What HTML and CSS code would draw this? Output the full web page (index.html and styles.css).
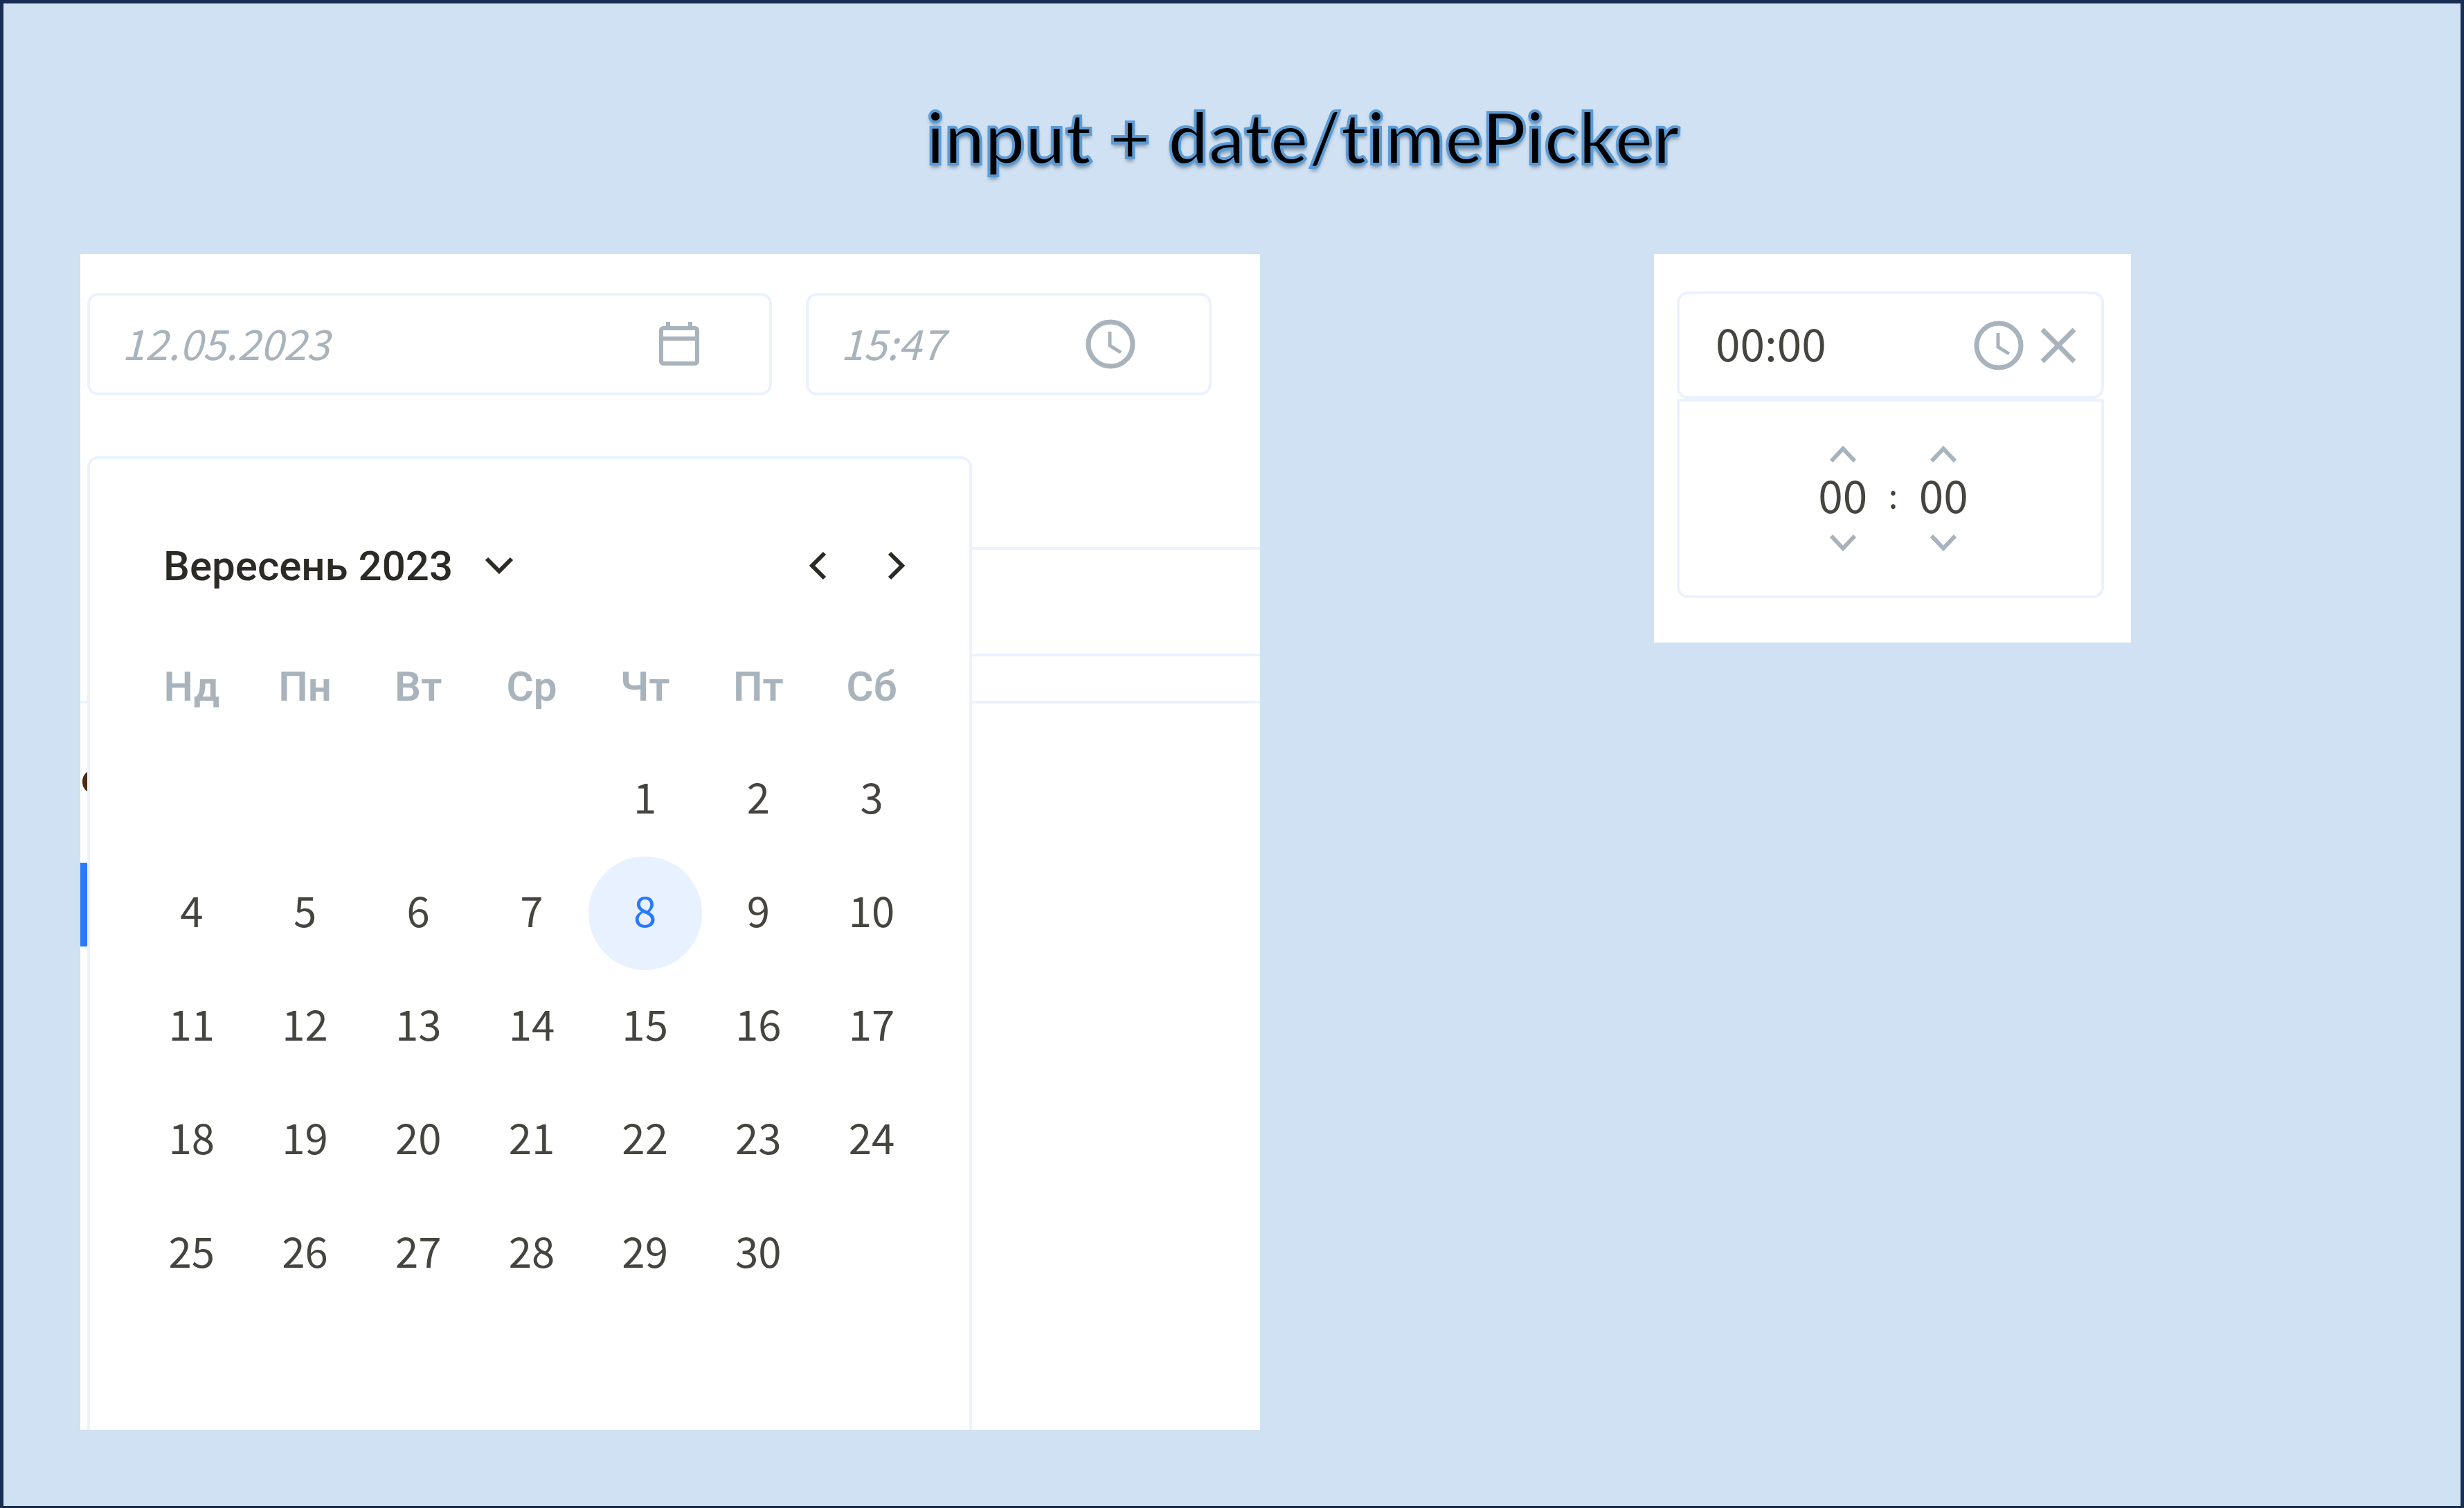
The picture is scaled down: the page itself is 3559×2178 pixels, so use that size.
FILE: index.html
```html
<!DOCTYPE html>
<html lang="uk">
<head>
<meta charset="utf-8">
<meta name="viewport" content="width=device-width, initial-scale=1">
<title>input + date/timePicker</title>
<link rel="stylesheet" href="styles.css">
</head>
<body>
<main class="board">
  <h1 class="title">input + date/timePicker</h1>
  <div class="demos">
    <section class="panel panel-date" aria-label="Date picker">
      <div class="underlay" aria-hidden="true">
        <div class="under-box"></div>
        <div class="under-line"></div>
        <div class="under-text"></div>
        <div class="under-button"></div>
      </div>
      <div class="fields">
        <div class="field field-date">
          <input class="field-input" type="text" placeholder="12.05.2023" aria-label="Дата">
          <svg class="icon-calendar" viewBox="0 0 58 64" fill="none" stroke="currentColor" stroke-width="6" aria-hidden="true"><rect x="3" y="9" width="52" height="51" rx="3"/><path d="M3 24H55M13 0V9M45 0V9"/></svg>
        </div>
        <div class="field field-time">
          <input class="field-input" type="text" placeholder="15:47" aria-label="Час">
          <svg class="icon-clock" viewBox="0 0 72 72" fill="none" stroke="currentColor" aria-hidden="true"><circle cx="36" cy="36" r="32" stroke-width="7"/><path d="M35 18V38L51 48" stroke-width="5"/></svg>
        </div>
      </div>
      <div class="calendar">
        <div class="calendar-head">
          <button class="month" type="button">Вересень 2023
            <svg class="icon-down" viewBox="0 0 42 28" fill="none" stroke="currentColor" stroke-width="6" aria-hidden="true"><path d="M3 4L21 22L39 4"/></svg>
          </button>
          <div class="nav">
            <button class="nav-button" type="button" aria-label="Попередній місяць"><svg class="icon-side" viewBox="0 0 28 42" fill="none" stroke="currentColor" stroke-width="6" aria-hidden="true"><path d="M24 3L6 21L24 39"/></svg></button>
            <button class="nav-button" type="button" aria-label="Наступний місяць"><svg class="icon-side" viewBox="0 0 28 42" fill="none" stroke="currentColor" stroke-width="6" aria-hidden="true"><path d="M4 3L22 21L4 39"/></svg></button>
          </div>
        </div>
        <table class="days">
          <thead>
            <tr><th>Нд</th><th>Пн</th><th>Вт</th><th>Ср</th><th>Чт</th><th>Пт</th><th>Сб</th></tr>
          </thead>
          <tbody>
            <tr><td></td><td></td><td></td><td></td><td><button class="day" type="button">1</button></td><td><button class="day" type="button">2</button></td><td><button class="day" type="button">3</button></td></tr>
            <tr><td><button class="day" type="button">4</button></td><td><button class="day" type="button">5</button></td><td><button class="day" type="button">6</button></td><td><button class="day" type="button">7</button></td><td><button class="day day-current" type="button">8</button></td><td><button class="day" type="button">9</button></td><td><button class="day" type="button">10</button></td></tr>
            <tr><td><button class="day" type="button">11</button></td><td><button class="day" type="button">12</button></td><td><button class="day" type="button">13</button></td><td><button class="day" type="button">14</button></td><td><button class="day" type="button">15</button></td><td><button class="day" type="button">16</button></td><td><button class="day" type="button">17</button></td></tr>
            <tr><td><button class="day" type="button">18</button></td><td><button class="day" type="button">19</button></td><td><button class="day" type="button">20</button></td><td><button class="day" type="button">21</button></td><td><button class="day" type="button">22</button></td><td><button class="day" type="button">23</button></td><td><button class="day" type="button">24</button></td></tr>
            <tr><td><button class="day" type="button">25</button></td><td><button class="day" type="button">26</button></td><td><button class="day" type="button">27</button></td><td><button class="day" type="button">28</button></td><td><button class="day" type="button">29</button></td><td><button class="day" type="button">30</button></td><td></td></tr>
          </tbody>
        </table>
      </div>
    </section>

    <section class="panel panel-time" aria-label="Time picker">
      <div class="field field-clock">
        <input class="field-input" type="text" value="00:00" aria-label="Час">
        <svg class="icon-clock" viewBox="0 0 72 72" fill="none" stroke="currentColor" aria-hidden="true"><circle cx="36" cy="36" r="32" stroke-width="7"/><path d="M35 18V38L51 48" stroke-width="5"/></svg>
        <button class="clear" type="button" aria-label="Очистити"><svg class="icon-close" viewBox="0 0 52 52" fill="none" stroke="currentColor" stroke-width="7" aria-hidden="true"><path d="M3 3L49 49M49 3L3 49"/></svg></button>
      </div>
      <div class="time-menu">
        <div class="spinner">
          <button class="step" type="button" aria-label="Години більше"><svg class="icon-step" viewBox="0 0 38 24" fill="none" stroke="currentColor" stroke-width="6" aria-hidden="true"><path d="M2 22L19 4L36 22"/></svg></button>
          <span class="value">00</span>
          <button class="step" type="button" aria-label="Години менше"><svg class="icon-step" viewBox="0 0 38 24" fill="none" stroke="currentColor" stroke-width="6" aria-hidden="true"><path d="M2 2L19 20L36 2"/></svg></button>
        </div>
        <span class="colon">:</span>
        <div class="spinner">
          <button class="step" type="button" aria-label="Хвилини більше"><svg class="icon-step" viewBox="0 0 38 24" fill="none" stroke="currentColor" stroke-width="6" aria-hidden="true"><path d="M2 22L19 4L36 22"/></svg></button>
          <span class="value">00</span>
          <button class="step" type="button" aria-label="Хвилини менше"><svg class="icon-step" viewBox="0 0 38 24" fill="none" stroke="currentColor" stroke-width="6" aria-hidden="true"><path d="M2 2L19 20L36 2"/></svg></button>
        </div>
      </div>
    </section>
  </div>
</main>
</body>
</html>
```
FILE: styles.css
```css
:root {
  --line: #eaf2ff;
  --muted: #a9b3bc;
  --ink: #2b2a24;
  --soft-ink: #45443f;
  --accent: #2979ff;
  --digits: "Noto Sans CJK SC", "Noto Sans", sans-serif;
  --text: Roboto, "Noto Sans", sans-serif;
}

*, *::before, *::after { box-sizing: border-box; }

body {
  margin: 0;
  font-family: var(--text);
  font-size: 60px;
  color: var(--ink);
}

button {
  padding: 0;
  border: 0;
  background: none;
  color: inherit;
  font: inherit;
  cursor: pointer;
}

svg { display: block; flex: none; }

.board {
  min-height: 100vh;
  padding: 132px 0 110px 111px;
  border: 5px solid #172d52;
  background: #cfe1f2;
}

.title {
  margin: 0 0 110px;
  padding-left: 1222px;
  font: 700 103px/120px Lato, sans-serif;
  font-variant-ligatures: none;
  white-space: nowrap;
  color: #000;
  -webkit-text-stroke: 4px #5b9bd5;
  text-shadow: 0 5px 5px rgba(60, 80, 105, 0.5);
}

.demos {
  display: grid;
  grid-template-columns: minmax(0, 1704fr) minmax(0, 689fr);
  column-gap: 569px;
  align-items: start;
  padding-right: 476px;
}

.panel { background: #fff; }

/* Date picker */
.panel-date {
  position: relative;
  padding: 56px 70px 0 10px;
}

.underlay {
  position: absolute;
  inset: 0;
  overflow: hidden;
}

.under-box {
  position: absolute;
  top: 423px;
  left: 20px;
  right: 0;
  height: 158px;
  border-top: 4px solid var(--line);
  border-bottom: 4px solid var(--line);
}

.under-line {
  position: absolute;
  top: 645px;
  left: 0;
  right: 0;
  height: 4px;
  background: var(--line);
}

.under-text {
  position: absolute;
  top: 747px;
  left: 3px;
  width: 22px;
  height: 30px;
  border-radius: 50%;
  background: #4a2c10;
}

.under-button {
  position: absolute;
  top: 879px;
  left: 0;
  width: 20px;
  height: 121px;
  background: var(--accent);
}

.fields {
  position: relative;
  display: grid;
  grid-template-columns: minmax(0, 989fr) minmax(0, 586fr);
  column-gap: 49px;
}

.field {
  display: flex;
  align-items: center;
  height: 148px;
  border: 4px solid var(--line);
  border-radius: 16px;
  background: #fff;
  color: var(--muted);
}

.field-input {
  flex: 1;
  min-width: 0;
  height: 100%;
  padding: 0 0 10px;
  border: 0;
  outline: 0;
  background: none;
  color: var(--soft-ink);
  font: 400 64px/90px var(--digits);
}

.field-input::placeholder {
  color: var(--muted);
  font-size: 60px;
  font-style: italic;
  opacity: 1;
}

.field-date { padding: 0 101px 0 46px; }
.field-time { padding: 0 106px 0 46px; }

.icon-calendar { width: 58px; height: 64px; }
.icon-clock { width: 72px; height: 72px; }

.calendar {
  position: relative;
  width: 1278px;
  max-width: 100%;
  margin-top: 88px;
  padding: 86px 59px 172px 65px;
  border: 4px solid var(--line);
  border-bottom: 0;
  border-radius: 16px 16px 0 0;
  background: #fff;
}

.calendar-head {
  display: flex;
  align-items: center;
  justify-content: space-between;
  height: 136px;
  padding: 0 18px 0 41px;
}

.month {
  display: flex;
  align-items: center;
  gap: 46px;
  font-weight: 500;
}

.icon-down { width: 42px; height: 28px; }

.nav { display: flex; gap: 58px; }

.nav-button {
  display: grid;
  place-items: center;
  width: 56px;
  height: 72px;
}

.icon-side { width: 28px; height: 42px; }

.days {
  width: 100%;
  margin-top: 24px;
  table-layout: fixed;
  border-collapse: collapse;
}

.days th, .days td {
  height: 164px;
  padding: 0;
  text-align: center;
}

.days th {
  font-weight: 600;
  color: var(--muted);
}

.day {
  display: block;
  width: 164px;
  max-width: 100%;
  height: 164px;
  padding-bottom: 12px;
  border-radius: 50%;
  color: var(--soft-ink);
  font: 400 60px/90px var(--digits);
}

.day-current {
  background: #e8f1ff;
  color: var(--accent);
}

/* Time picker */
.panel-time { padding: 54px 39px 64px 33px; }

.field-clock {
  height: 155px;
  padding: 0 36px 0 52px;
}

.clear {
  margin-left: 24px;
  color: var(--muted);
}

.icon-close { width: 52px; height: 52px; }

.time-menu {
  display: flex;
  justify-content: center;
  align-items: center;
  gap: 28px;
  height: 288px;
  padding-left: 8px;
  border: 4px solid var(--line);
  border-radius: 4px 4px 16px 16px;
}

.spinner {
  display: flex;
  flex-direction: column;
  align-items: center;
}

.step {
  display: grid;
  place-items: center;
  width: 76px;
  height: 24px;
  color: var(--muted);
}

.icon-step { width: 38px; height: 24px; }

.value, .colon {
  height: 104px;
  color: var(--soft-ink);
  font: 400 64px/90px var(--digits);
}

.colon { font-size: 48px; }
```
